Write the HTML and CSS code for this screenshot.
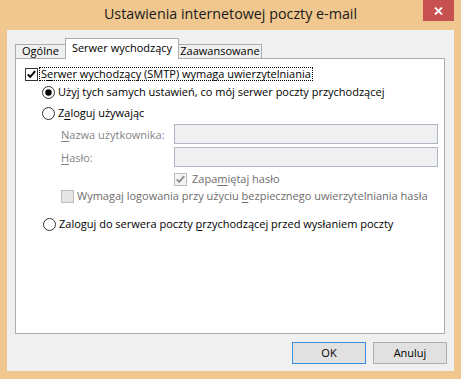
FILE: index.html
```html
<!DOCTYPE html>
<html lang="pl">
<head>
<meta charset="utf-8">
<title>Ustawienia internetowej poczty e-mail</title>
<link rel="stylesheet" href="styles.css">
</head>
<body>
<div class="window">
  <div class="titlebar">
    <span class="title">Ustawienia internetowej poczty e-mail</span>
    <div class="close">
      <svg width="9" height="8" viewBox="0 0 9 8"><path d="M1 0.5 L8 7.5 M8 0.5 L1 7.5" stroke="#fff" stroke-width="1.8" fill="none"/></svg>
    </div>
  </div>
  <div class="client">
    <div class="tabs">
      <div class="tab tab-general">Ogólne</div>
      <div class="tab tab-active tab-outgoing">Serwer wychodzący</div>
      <div class="tab tab-advanced">Zaawansowane</div>
    </div>
    <div class="panel">
      <div class="row row-auth">
        <svg class="cb" width="13" height="13" viewBox="0 0 13 13"><rect x="0.5" y="0.5" width="12" height="12" fill="#fff" stroke="#333"/><path d="M2.8 6.3 L5.2 8.9 L10.2 3.2" fill="none" stroke="#000" stroke-width="1.9"/></svg>
        <span class="focus">S<u>e</u>rwer wychodzący (SMTP) wymaga uwierzytelniania</span>
      </div>
      <div class="row row-same">
        <svg class="rb" width="13" height="13" viewBox="0 0 13 13"><circle cx="6.5" cy="6.5" r="6" fill="#fff" stroke="#333"/><circle cx="6.5" cy="6.5" r="3.2" fill="#000"/></svg>
        <span class="lbl">Użyj tych samych ustawień, co mój serwer poczty przychodzącej</span>
      </div>
      <div class="row row-login">
        <svg class="rb" width="13" height="13" viewBox="0 0 13 13"><circle cx="6.5" cy="6.5" r="6" fill="#fff" stroke="#333"/></svg>
        <span class="lbl">Z<u>a</u>loguj używając</span>
      </div>
      <div class="row row-field row-user">
        <span class="field-label"><u>N</u>azwa użytkownika:</span>
        <span class="input"></span>
      </div>
      <div class="row row-field row-pass">
        <span class="field-label"><u>H</u>asło:</span>
        <span class="input"></span>
      </div>
      <div class="row row-remember">
        <svg class="cb" width="13" height="13" viewBox="0 0 13 13"><rect x="0.5" y="0.5" width="12" height="12" fill="#f4f4f4" stroke="#bcbcbc"/><path d="M2.8 6.3 L5.2 8.9 L10.2 3.2" fill="none" stroke="#8d8d8d" stroke-width="1.9"/></svg>
        <span class="lbl lbl-disabled">Zapa<u>m</u>iętaj hasło</span>
      </div>
      <div class="row row-spa">
        <svg class="cb" width="13" height="13" viewBox="0 0 13 13"><rect x="0.5" y="0.5" width="12" height="12" fill="#e6e6e6" stroke="#bcbcbc"/></svg>
        <span class="lbl lbl-disabled">Wymagaj logowania przy użyciu <u>b</u>ezpiecznego uwierzytelniania hasła</span>
      </div>
      <div class="row row-pop">
        <svg class="rb" width="13" height="13" viewBox="0 0 13 13"><circle cx="6.5" cy="6.5" r="6" fill="#fff" stroke="#333"/></svg>
        <span class="lbl">Zaloguj do serwera poczty <u>p</u>rzychodzącej przed wysłaniem poczty</span>
      </div>
    </div>
    <div class="buttons">
      <div class="btn btn-default">OK</div>
      <div class="btn">Anuluj</div>
    </div>
  </div>
</div>
</body>
</html>
```
FILE: styles.css
```css
html, body {
  margin: 0;
  padding: 0;
}

body {
  font-family: "Open Sans", "Noto Sans", sans-serif;
  font-size: 11px;
  color: #000;
  background: #f0c88f;
}

.window {
  width: 461px;
  height: 379px;
  background: #f0c88f;
  display: flex;
  flex-direction: column;
}

.titlebar {
  position: relative;
  height: 30px;
  flex: none;
  text-align: center;
}

.title {
  display: block;
  font-size: 14.3px;
  line-height: 28px;
  color: #1a1a1a;
}

.close {
  position: absolute;
  top: 0;
  right: 7px;
  width: 31px;
  height: 21px;
  background: #c75050;
  display: flex;
  align-items: center;
  justify-content: center;
}

.client {
  margin: 0 7px 8px 7px;
  height: 341px;
  background: #f0f0f0;
  display: flex;
  flex-direction: column;
}

.tabs {
  display: flex;
  align-items: flex-end;
  height: 20px;
  margin-top: 8px;
  padding-left: 8px;
}

.tab {
  box-sizing: border-box;
  height: 14px;
  border: 1px solid #acacac;
  border-bottom: none;
  background: #f0f0f0;
  line-height: 12px;
  text-align: center;
  white-space: nowrap;
}

.tab-general { width: 51px; }
.tab-outgoing { width: 114px; }
.tab-advanced { width: 84px; margin-left: -1px; }

.tab-active {
  position: relative;
  z-index: 1;
  height: 21px;
  margin-bottom: -1px;
  margin-left: -1px;
  background: #fff;
  line-height: 16px;
  padding-top: 1px;
}

.panel {
  box-sizing: border-box;
  height: 276px;
  margin: 0 9px 0 8px;
  border: 1px solid #acacac;
  background: #fff;
  padding-top: 7px;
  display: flex;
  flex-direction: column;
}

.row {
  display: flex;
  align-items: center;
  height: 16px;
  white-space: nowrap;
}

.row svg {
  flex: none;
  display: block;
}

.lbl {
  line-height: 16px;
}

.lbl-disabled {
  color: #6d6d6d;
}

u {
  text-underline-offset: 2px;
}

.row-auth { padding-left: 9px; }
.row-auth .cb { margin-right: 1px; }

.focus {
  line-height: 12px;
  border: 1px dotted #000;
  padding: 0 1px;
}

.row-same { margin-top: 2px; padding-left: 26px; }
.row-login { margin-top: 5px; padding-left: 26px; }
.row-same .rb, .row-login .rb { margin-right: 3px; }

.row-field {
  height: 20px;
  padding-left: 45px;
  padding-right: 6px;
}
.row-user { margin-top: 3px; }
.row-pass { margin-top: 3px; }

.field-label {
  width: 113px;
  flex: none;
  color: #838383;
}

.input {
  box-sizing: border-box;
  flex: 1;
  height: 20px;
  background: #f0f0f0;
  border: 1px solid #adb8c4;
}

.row-remember { margin-top: 4px; padding-left: 158px; }
.row-remember .cb { margin-right: 5px; }

.row-spa { margin-top: 1px; padding-left: 45px; }
.row-spa .cb { margin-right: 3px; }

.row-pop { margin-top: 12px; padding-left: 27px; }
.row-pop .rb { margin-right: 3px; }

.buttons {
  display: flex;
  justify-content: flex-end;
  gap: 7px;
  margin-top: 8px;
  padding-right: 7px;
}

.btn {
  box-sizing: border-box;
  width: 74px;
  height: 22px;
  line-height: 20px;
  text-align: center;
  background: #e1e1e1;
  border: 1px solid #adadad;
}

.btn-default {
  border-color: #3c8ce0;
}
```
